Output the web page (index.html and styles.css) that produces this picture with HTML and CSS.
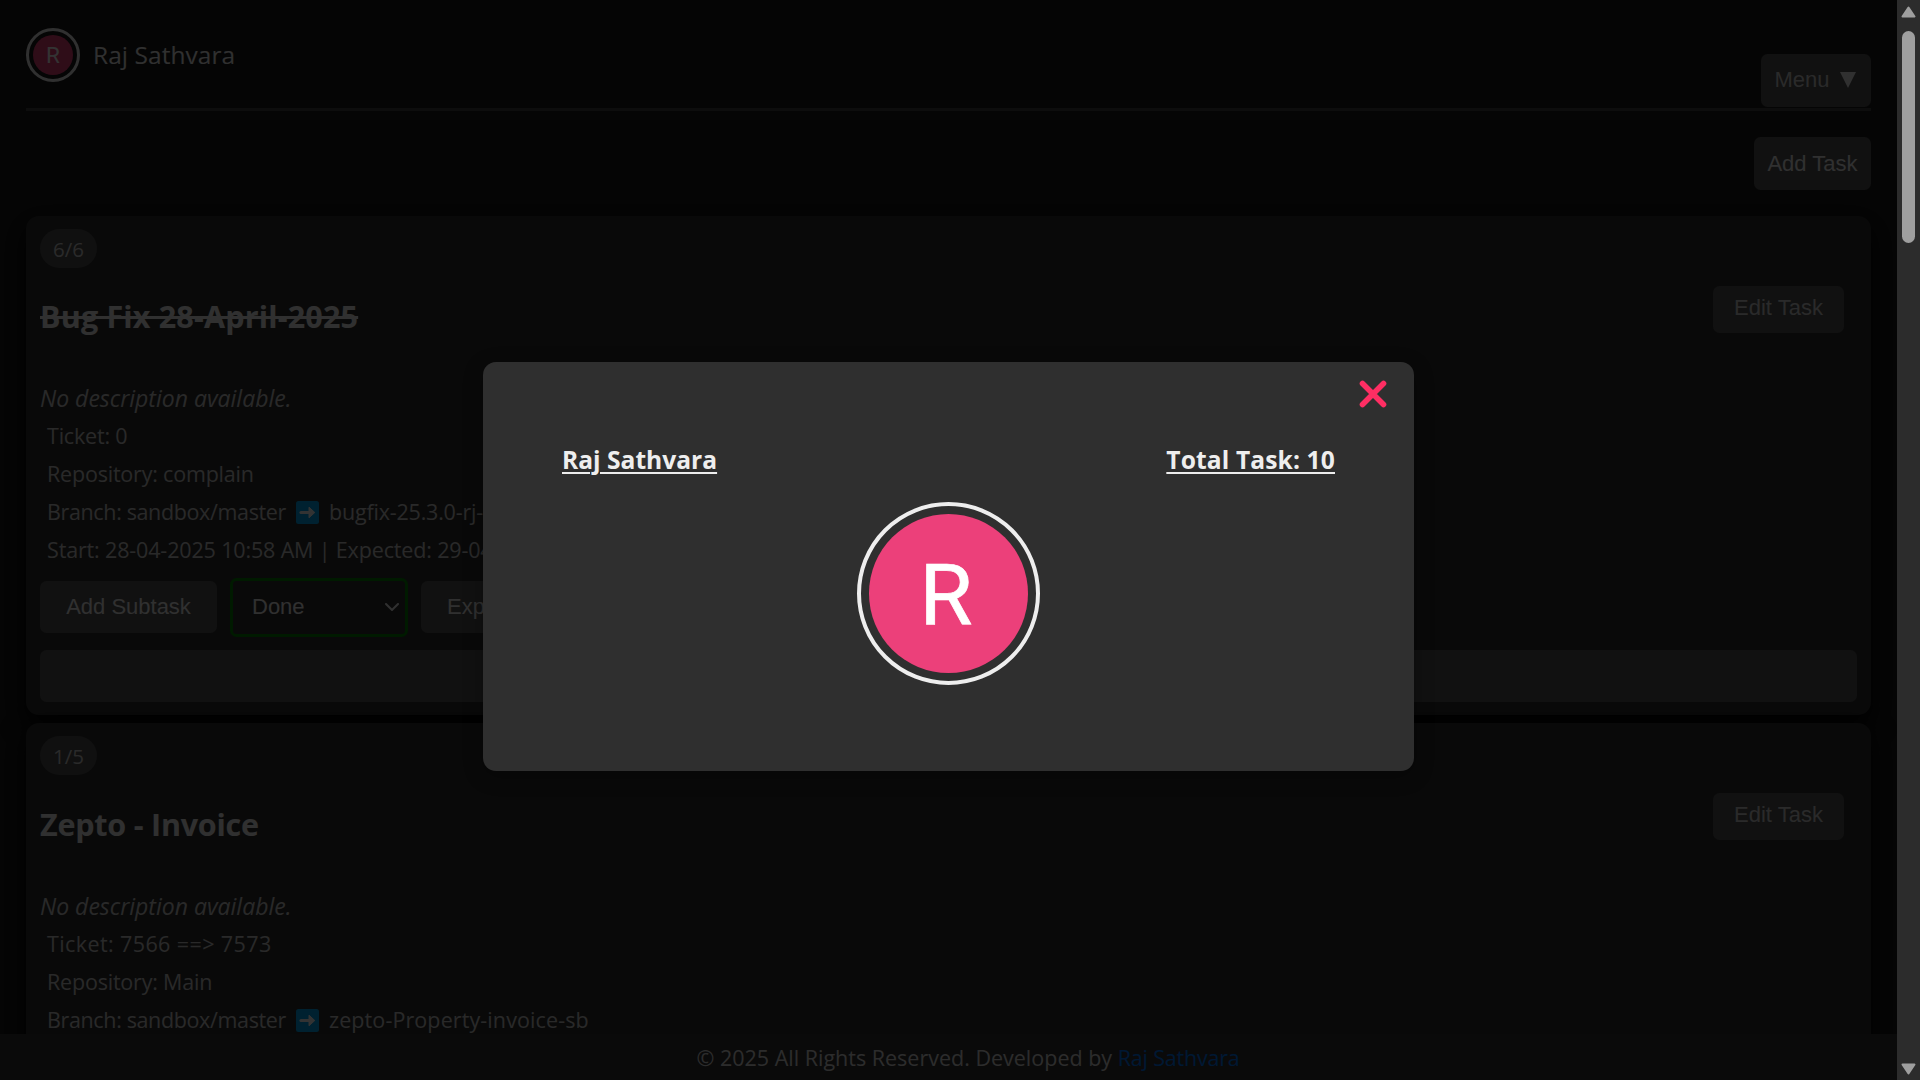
FILE: index.html
```html
<!DOCTYPE html>
<html lang="en">
<head>
<meta charset="utf-8">
<title>Tasks</title>
<link rel="stylesheet" href="styles.css">
</head>
<body>
<div class="page">
  <header class="header">
    <div class="user">
      <div class="avatar"><span class="avatar-letter">R</span></div>
      <span class="user-name">Raj Sathvara</span>
    </div>
    <button class="btn menu-btn">Menu <svg class="caret" viewBox="0 0 16 16"><path d="M0 0h16L8 16z"/></svg></button>
  </header>
  <div class="toolbar"><button class="btn add-btn">Add Task</button></div>

  <main class="tasks">
    <article class="card">
      <span class="badge">6/6</span>
      <div class="title-row">
        <h2 class="title done">Bug Fix 28-April-2025</h2>
        <button class="btn edit-btn">Edit Task</button>
      </div>
      <p class="desc">No description available.</p>
      <p class="meta">Ticket: 0</p>
      <p class="meta">Repository: complain</p>
      <p class="meta branch"><span class="from">Branch: sandbox/master</span><svg class="arrow" viewBox="0 0 23 23"><rect width="23" height="23" rx="2.5" fill="#00a6ed"/><path d="M5 11.5h9" stroke="#fff" stroke-width="3.2" stroke-linecap="round"/><path d="M13 6.2l5.8 5.3-5.8 5.3z" fill="#fff" stroke="#fff" stroke-linejoin="round"/></svg><span>bugfix-25.3.0-rj-sb</span></p>
      <p class="meta dates">Start: 28-04-2025 10:58 AM | Expected: 29-04-2025</p>
      <div class="actions">
        <button class="btn sub-btn">Add Subtask</button>
        <div class="select"><span>Done</span><svg class="chevron" viewBox="0 0 14 8"><path d="M1 1l6 6 6-6"/></svg></div>
        <button class="btn sub-btn export-btn">Export Task</button>
      </div>
      <div class="bar"></div>
    </article>

    <article class="card">
      <span class="badge">1/5</span>
      <div class="title-row">
        <h2 class="title plain">Zepto - Invoice</h2>
        <button class="btn edit-btn">Edit Task</button>
      </div>
      <p class="desc">No description available.</p>
      <p class="meta ticket-range">Ticket: 7566 ==&gt; 7573</p>
      <p class="meta">Repository: Main</p>
      <p class="meta branch"><span class="from">Branch: sandbox/master</span><svg class="arrow" viewBox="0 0 23 23"><rect width="23" height="23" rx="2.5" fill="#00a6ed"/><path d="M5 11.5h9" stroke="#fff" stroke-width="3.2" stroke-linecap="round"/><path d="M13 6.2l5.8 5.3-5.8 5.3z" fill="#fff" stroke="#fff" stroke-linejoin="round"/></svg><span class="to">zepto-Property-invoice-sb</span></p>
    </article>
  </main>

  <footer class="footer">© 2025 All Rights Reserved. Developed by <a class="link">Raj Sathvara</a></footer>

  <div class="overlay">
    <section class="modal">
      <svg class="close" viewBox="0 0 28 28"><path d="M3.5 3.5l21 21M24.5 3.5l-21 21"/></svg>
      <div class="modal-head"><span class="modal-name">Raj Sathvara</span><span class="modal-total">Total Task: 10</span></div>
      <div class="avatar large"><span class="avatar-letter">R</span></div>
    </section>
  </div>
</div>
<div class="scrollbar">
  <svg class="sb-arrow" viewBox="0 0 15 12"><path d="M7.5 1.5L13.5 10.5H1.5z"/></svg>
  <div class="thumb"></div>
  <svg class="sb-arrow down" viewBox="0 0 15 12"><path d="M7.5 10.5L13.5 1.5H1.5z"/></svg>
</div>
</body>
</html>
```
FILE: styles.css
```css
* { box-sizing: border-box; }
body {
  margin: 0;
  display: flex;
  height: 1080px;
  overflow: hidden;
  background: #1a1a1a;
  color: #eee;
  font-family: "Open Sans", "Noto Sans", sans-serif;
  font-size: 21.5px;
}
h2, p { margin: 0; }

.page {
  position: relative;
  flex: 1;
  height: 1080px;
  padding: 28px 26px 0;
  overflow: hidden;
}

.header {
  display: flex;
  justify-content: space-between;
  align-items: flex-start;
  height: 83px;
  border-bottom: 3px solid #444;
}
.user { display: flex; align-items: center; height: 54px; gap: 13px; }
.user-name { font-size: 24.5px; line-height: 54px; letter-spacing: 0.05px; }

.avatar {
  display: flex;
  align-items: center;
  justify-content: center;
  width: 54px;
  height: 54px;
  padding: 4px;
  border: 3px solid #eee;
  border-radius: 50%;
  background: #ec407a content-box;
  color: #fff;
  font-family: Roboto, sans-serif;
  font-size: 22.5px;
  line-height: 1;
}

.btn {
  display: flex;
  align-items: center;
  justify-content: center;
  padding: 0;
  border: 0;
  border-radius: 6.5px;
  background: #555;
  color: #eee;
  font-family: "Liberation Sans", Arial, sans-serif;
  font-size: 22px;
  white-space: nowrap;
}
.menu-btn { width: 110px; height: 53px; margin-top: 26px; gap: 10px; padding: 0 2px 2px 0; color: #d0d0d0; }
.caret { width: 16px; height: 16px; fill: #eee; }
.toolbar { display: flex; justify-content: flex-end; padding: 26px 0; }
.add-btn { width: 117px; height: 53px; }
.edit-btn { width: 131px; height: 47px; margin-right: 13px; padding-bottom: 3px; color: #d0d0d0; }

.tasks { display: flex; flex-direction: column; gap: 8px; }
.card {
  padding: 13px 14px;
  border-radius: 13px;
  background: #2f2f2f;
  box-shadow: 0 10px 26px #000;
}
.badge {
  display: flex;
  align-items: center;
  justify-content: center;
  width: 57px;
  height: 39px;
  border-radius: 19.5px;
  background: #505050;
  font-size: 20.5px;
  color: #d0d0d0;
}
.title-row {
  display: flex;
  justify-content: space-between;
  align-items: flex-start;
  height: 52px;
  margin-top: 18px;
}
.title { margin-top: 8px; font-size: 30.5px; line-height: 44px; }
.done { letter-spacing: 0.18px; text-decoration: line-through; text-decoration-thickness: 3px; }
.plain { padding-top: 1px; letter-spacing: -0.22px; }
.desc { margin-top: 41px; font-size: 23px; line-height: 38px; font-style: italic; color: #ccc; }
.card + .card .desc { margin-top: 42px; }
.meta { padding-left: 7px; line-height: 38px; letter-spacing: -0.2px; color: #ccc; white-space: nowrap; }
.dates { letter-spacing: -0.15px; }
.ticket-range { letter-spacing: 0.4px; }
.branch { display: flex; align-items: center; }
.from { width: 249px; letter-spacing: -0.36px; }
.to { letter-spacing: 0.1px; }
.arrow { width: 23px; height: 23px; margin-right: 10px; }

.actions { display: flex; align-items: center; gap: 13px; height: 60px; margin-top: 8px; }
.sub-btn { width: 177px; height: 52px; }
.export-btn { justify-content: flex-start; padding-left: 26px; }
.select {
  display: flex;
  align-items: center;
  justify-content: space-between;
  width: 178px;
  height: 59px;
  padding: 0 6px 0 19px;
  border: 3px solid #008000;
  border-radius: 6.5px;
  font-family: "Liberation Sans", Arial, sans-serif;
  font-size: 22px;
}
.chevron { width: 14px; height: 8px; fill: none; stroke: #eee; stroke-width: 2; stroke-linecap: round; }
.bar { height: 52px; margin-top: 13px; border-radius: 6.5px; background: #555; }

.footer {
  position: absolute;
  left: 0;
  right: 0;
  bottom: 0;
  height: 46px;
  padding: 2px 0 0 39px;
  background: #333;
  text-align: center;
  line-height: 44px;
  color: #ddd;
}
.link { color: #007bff; letter-spacing: -0.2px; }

.overlay {
  position: absolute;
  inset: 0;
  display: flex;
  align-items: flex-start;
  justify-content: center;
  padding-top: 362px;
  background: rgba(0, 0, 0, 0.8);
}
.modal {
  position: relative;
  display: flex;
  flex-direction: column;
  align-items: center;
  width: 931px;
  height: 409px;
  padding: 79px 79px 0;
  border-radius: 13px;
  background: #2f2f2f;
  box-shadow: 0 5px 20px rgba(0, 0, 0, 0.3);
}
.modal-head {
  display: flex;
  justify-content: space-between;
  width: 100%;
  height: 61px;
  font-weight: 700;
  font-size: 24.6px;
  line-height: 37px;
  text-decoration: underline;
  text-decoration-thickness: 2px;
  text-underline-offset: 3px;
}
.modal-total { letter-spacing: 0.12px; }
.large { width: 183px; height: 183px; padding: 8px; border-width: 4px; font-size: 86px; }
.large .avatar-letter { padding: 4px 5px 0 0; -webkit-text-stroke: 0.7px #fff; }
.close {
  position: absolute;
  top: 18px;
  right: 27px;
  width: 28px;
  height: 28px;
  stroke: #ff2e63;
  stroke-width: 5.6;
  stroke-linecap: round;
}

.scrollbar {
  display: flex;
  flex-direction: column;
  align-items: center;
  width: 23px;
  padding: 6px 0 5px;
  background: #2c2c2c;
}
.sb-arrow { width: 15px; height: 12px; fill: #9f9f9f; stroke: #9f9f9f; stroke-width: 2; stroke-linejoin: round; }
.thumb { width: 13px; height: 212px; margin-top: 13px; border-radius: 6.5px; background: #9f9f9f; }
.down { margin-top: auto; }
```
